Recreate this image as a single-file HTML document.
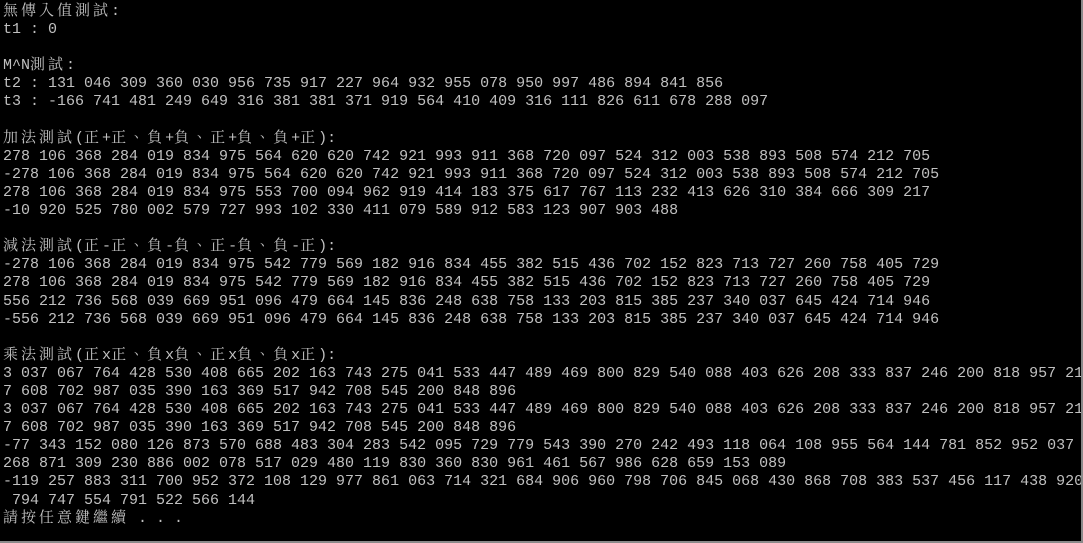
<!DOCTYPE html>
<html><head><meta charset="utf-8"><style>
html,body{margin:0;padding:0;background:#000;}
body{width:1083px;height:543px;overflow:hidden;position:relative;}
pre{margin:0;position:absolute;left:3px;top:3px;font-family:"Liberation Mono","Noto Serif CJK TC",monospace;font-size:15px;line-height:18px;color:#c0c0c0;white-space:pre;}
pre div{height:18.1px;line-height:18px;overflow:visible;}
.c{font-family:"Noto Serif CJK TC","Noto Sans CJK TC",serif;letter-spacing:3px;line-height:0;}
.br{position:absolute;right:0;top:0;width:2px;height:543px;background:#8a8a8a;}
.bb{position:absolute;left:0;bottom:0;height:2px;width:1083px;background:#8a8a8a;}
</style></head><body>
<pre><div><span class="c">無傳入值測試</span>:</div><div>t1 : 0</div><div> </div><div>M^N<span class="c">測試</span>:</div><div>t2 : 131 046 309 360 030 956 735 917 227 964 932 955 078 950 997 486 894 841 856</div><div>t3 : -166 741 481 249 649 316 381 381 371 919 564 410 409 316 111 826 611 678 288 097</div><div> </div><div><span class="c">加法測試</span>(<span class="c">正</span>+<span class="c">正、負</span>+<span class="c">負、正</span>+<span class="c">負、負</span>+<span class="c">正</span>):</div><div>278 106 368 284 019 834 975 564 620 620 742 921 993 911 368 720 097 524 312 003 538 893 508 574 212 705</div><div>-278 106 368 284 019 834 975 564 620 620 742 921 993 911 368 720 097 524 312 003 538 893 508 574 212 705</div><div>278 106 368 284 019 834 975 553 700 094 962 919 414 183 375 617 767 113 232 413 626 310 384 666 309 217</div><div>-10 920 525 780 002 579 727 993 102 330 411 079 589 912 583 123 907 903 488</div><div> </div><div><span class="c">減法測試</span>(<span class="c">正</span>-<span class="c">正、負</span>-<span class="c">負、正</span>-<span class="c">負、負</span>-<span class="c">正</span>):</div><div>-278 106 368 284 019 834 975 542 779 569 182 916 834 455 382 515 436 702 152 823 713 727 260 758 405 729</div><div>278 106 368 284 019 834 975 542 779 569 182 916 834 455 382 515 436 702 152 823 713 727 260 758 405 729</div><div>556 212 736 568 039 669 951 096 479 664 145 836 248 638 758 133 203 815 385 237 340 037 645 424 714 946</div><div>-556 212 736 568 039 669 951 096 479 664 145 836 248 638 758 133 203 815 385 237 340 037 645 424 714 946</div><div> </div><div><span class="c">乘法測試</span>(<span class="c">正</span>x<span class="c">正、負</span>x<span class="c">負、正</span>x<span class="c">負、負</span>x<span class="c">正</span>):</div><div>3 037 067 764 428 530 408 665 202 163 743 275 041 533 447 489 469 800 829 540 088 403 626 208 333 837 246 200 818 957 21</div><div>7 608 702 987 035 390 163 369 517 942 708 545 200 848 896</div><div>3 037 067 764 428 530 408 665 202 163 743 275 041 533 447 489 469 800 829 540 088 403 626 208 333 837 246 200 818 957 21</div><div>7 608 702 987 035 390 163 369 517 942 708 545 200 848 896</div><div>-77 343 152 080 126 873 570 688 483 304 283 542 095 729 779 543 390 270 242 493 118 064 108 955 564 144 781 852 952 037</div><div>268 871 309 230 886 002 078 517 029 480 119 830 360 830 961 461 567 986 628 659 153 089</div><div>-119 257 883 311 700 952 372 108 129 977 861 063 714 321 684 906 960 798 706 845 068 430 868 708 383 537 456 117 438 920</div><div> 794 747 554 791 522 566 144</div><div><span class="c">請按任意鍵繼續</span> . . .</div></pre>
<div class="br"></div><div class="bb"></div>
</body></html>
